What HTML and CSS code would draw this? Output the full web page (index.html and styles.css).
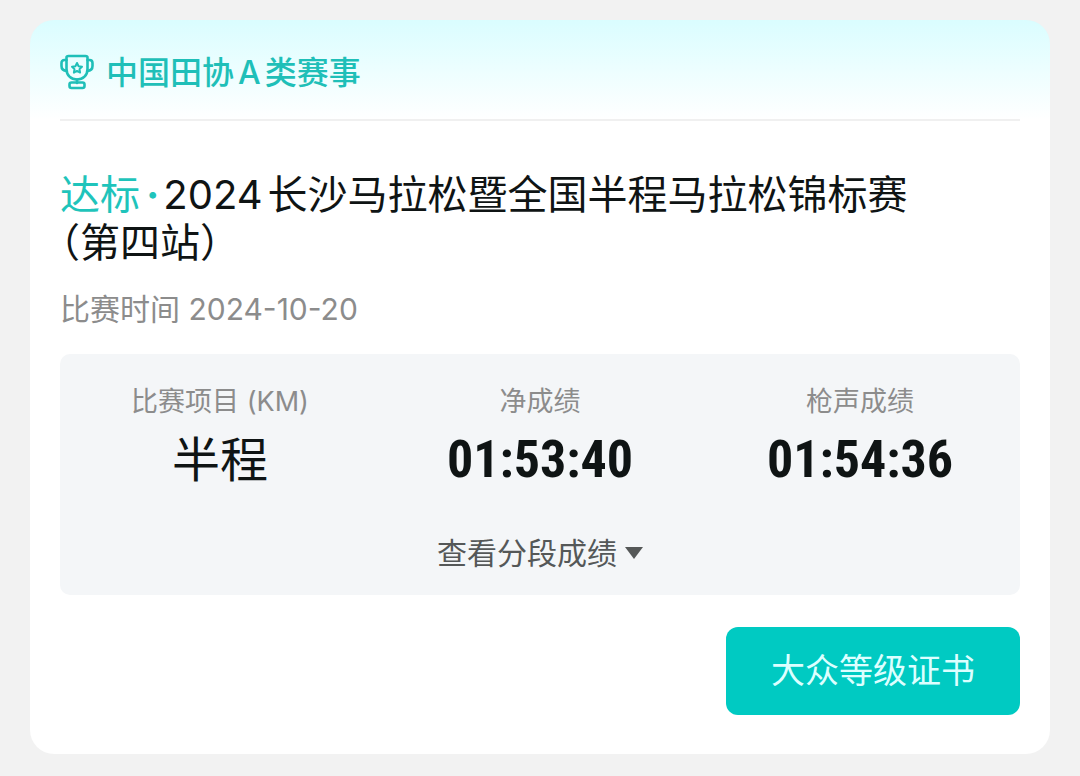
FILE: index.html
```
<!DOCTYPE html>
<html lang="zh-CN">

<head>
    <meta charset="UTF-8">
    <meta name="viewport" content="width=device-width, initial-scale=1">
    <title>赛事成绩</title>
    <link rel="stylesheet" href="styles.css">
</head>

<body>
    <main class="card">
        <header class="card-header">
            <svg class="trophy" viewBox="0 0 34 36" fill="none" stroke="currentColor" stroke-width="2.6" stroke-linejoin="round" stroke-linecap="round" aria-hidden="true">
                <path d="M6.5 3.5C6.5 2.5 7.3 2 8.500 2h17c1.200 0 2 .5 2 1.500V15c0 6.500-4.500 10.500-10.500 10.500S6.500 21.500 6.500 15z" />
                <path d="M6.500 6h-2c-2 0-3 1.200-3 3v3c0 3 2 4.700 5.300 5M27.500 6h2c2 0 3 1.200 3 3v3c0 3-2 4.700-5.300 5" />
                <path d="M17 25.500V29" />
                <rect x="9.500" y="28.500" width="15" height="5.500" rx="2" />
                <path d="M17 9l1.500 3.200 3.500.5-2.500 2.400.6 3.500-3.100-1.700-3.100 1.700.6-3.500-2.500-2.400 3.500-.5z" stroke-width="2" />
            </svg>
            <span class="category">中国田协A类赛事</span>
        </header>

        <h1 class="title"><span class="status">达标<span class="dot">·</span></span>2024长沙马拉松暨全国半程马拉松锦标赛<br>（第四站）</h1>
        <p class="date">比赛时间 2024-10-20</p>

        <section class="panel">
            <dl class="results">
                <div class="result">
                    <dt>比赛项目 (KM)</dt>
                    <dd>半程</dd>
                </div>
                <div class="result">
                    <dt>净成绩</dt>
                    <dd class="time">01:53:40</dd>
                </div>
                <div class="result">
                    <dt>枪声成绩</dt>
                    <dd class="time">01:54:36</dd>
                </div>
            </dl>
            <button type="button" class="more">查看分段成绩<span class="arrow"></span></button>
        </section>

        <div class="actions">
            <button type="button" class="certificate">大众等级证书</button>
        </div>
    </main>
</body>

</html>
```
FILE: styles.css
```
* {
    box-sizing: border-box;
}

body {
    margin: 0;
    padding: 20px 30px;
    background-color: #f2f2f2;
    color: #0f1414;
    font-family: Inter, "Noto Sans CJK SC", sans-serif;
    text-autospace: normal;
}

button {
    border: none;
    font-family: inherit;
    cursor: pointer;
}

.card {
    padding: 0 30px 39px;
    border-radius: 24px;
    background: linear-gradient(#dafdff, #ffffff 100px) #ffffff;
}

/* Header */
.card-header {
    display: flex;
    align-items: center;
    gap: 12px;
    height: 101px;
    padding-top: 4px;
    border-bottom: 2px solid #f0f0f0;
    color: #1fbfb8;
}

.trophy {
    width: 34px;
    height: 36px;
}

.category {
    padding-bottom: 4px;
    font-size: 32px;
    font-weight: 500;
}

/* Race */
.title {
    margin: 50px 0 24px;
    font-size: 40px;
    font-weight: 400;
    line-height: 48px;
    font-feature-settings: "halt";
}

.status {
    color: #1fc4bb;
}

.dot {
    margin: 0 4px 0 6px;
    font-weight: 700;
}

.date {
    margin: 0 0 27px;
    color: #8c8c8c;
    font-size: 30px;
    line-height: 36px;
}

/* Results */
.panel {
    padding: 30px 0 16px;
    border-radius: 10px;
    background-color: #f4f6f8;
    text-align: center;
}

.results {
    display: grid;
    grid-template-columns: repeat(3, 1fr);
    margin: 0 0 37px;
}

.result dt {
    color: #8c8c8c;
    font-size: 27px;
    line-height: 36px;
}

.result dd {
    margin: 10px 0 0;
    font-size: 48px;
    line-height: 60px;
}

.result .time {
    font-family: "Roboto Condensed", "Liberation Sans Narrow", sans-serif;
    font-size: 52px;
    font-weight: 700;
}

.more {
    display: inline-flex;
    align-items: center;
    gap: 8px;
    padding: 6px;
    background: none;
    color: #555858;
    font-size: 30px;
    line-height: 40px;
}

.arrow {
    border: 9px solid transparent;
    border-top: 12px solid #555858;
    border-bottom: none;
}

/* Certificate */
.actions {
    display: flex;
    justify-content: flex-end;
    margin-top: 32px;
}

.certificate {
    padding: 20px 45px;
    border-radius: 12px;
    background-color: #00cac2;
    color: #dcffff;
    font-size: 34px;
    line-height: 48px;
}
```
